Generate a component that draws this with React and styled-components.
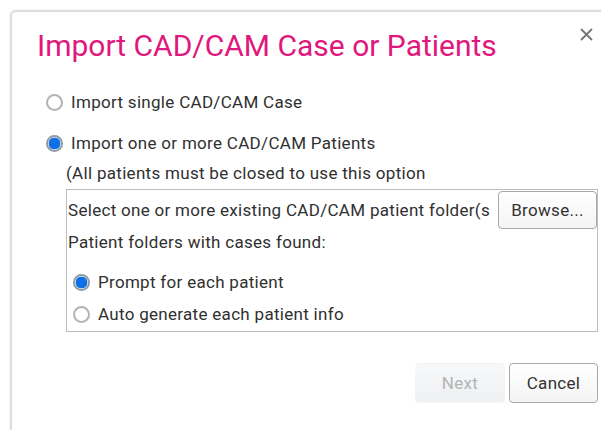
import React, { useState } from "react";
import styled, { createGlobalStyle, css } from "styled-components";

const GlobalStyle = createGlobalStyle`
  html, body {
    margin: 0;
    padding: 0;
    background: #ffffff;
  }

  body {
    font-family: Roboto, "Liberation Sans", Arial, sans-serif;
    color: #303030;
    overflow: hidden;
  }
`;

const Page = styled.div`
  width: 601px;
  height: 430px;
  padding: 10px 0 0 10px;
  box-sizing: border-box;
  overflow: hidden;
`;

const Dialog = styled.div`
  width: 600px;
  height: 440px;
  box-sizing: border-box;
  background: #ffffff;
  border: 2px solid #dcdcdc;
  border-radius: 6px 6px 0 0;
  box-shadow: 0 0 3px rgba(0, 0, 0, 0.08);
`;

const Header = styled.div`
  display: flex;
  align-items: flex-start;
  justify-content: space-between;
  width: 586px;
  box-sizing: border-box;
  padding: 17px 5px 0 25px;
  height: 76px;
`;

const Title = styled.h1`
  margin: 0;
  font-size: 30px;
  line-height: 34px;
  font-weight: 400;
  color: #e0177c;
`;

const CloseButton = styled.button`
  display: flex;
  align-items: center;
  justify-content: center;
  width: 14px;
  height: 14px;
  margin-top: -2px;
  padding: 0;
  border: 0;
  background: transparent;
  cursor: pointer;
`;

const Body = styled.div`
  width: 586px;
  box-sizing: border-box;
  padding-left: 34px;
  letter-spacing: 0.3px;
`;

const OptionRow = styled.label`
  display: flex;
  align-items: center;
  gap: 8px;
  height: 28px;
  font-size: 17px;
  cursor: pointer;
  margin-bottom: ${(p) => p.$gap || 0}px;
  ${(p) =>
    p.$inset &&
    css`
      height: 32px;
      padding-left: 5px;
    `}
`;

const RadioCircle = styled.span`
  display: inline-block;
  flex: none;
  width: 17px;
  height: 17px;
  box-sizing: border-box;
  border-radius: 50%;
  border: 2px solid #b3b3b3;
  background: #ffffff;
  ${(p) =>
    p.$checked &&
    css`
      border-color: #8f9aa6;
      background: radial-gradient(circle, #0f6fe6 0 5.6px, #ffffff 6.2px);
    `}
`;

const Note = styled.div`
  margin-left: 20px;
  height: 30px;
  display: flex;
  align-items: center;
  font-size: 17px;
  margin-top: 1px;
`;

const FolderBox = styled.div`
  margin-left: 20px;
  border: 1px solid #bdbdbd;
  padding: 0 0 1px 1px;
  margin-top: 1px;
`;

const SelectRow = styled.div`
  display: flex;
  align-items: center;
  justify-content: space-between;
  height: 40px;
  font-size: 17px;
`;

const PlainText = styled.span`
  white-space: nowrap;
`;

const Button = styled.button`
  font-family: Roboto, "Liberation Sans", Arial, sans-serif;
  font-size: 17px;
  letter-spacing: 0.3px;
  color: #333333;
  width: ${(p) => p.$width}px;
  height: ${(p) => p.$height || 40}px;
  border: 1px solid #a9a9a9;
  border-radius: 4px;
  background: linear-gradient(#ffffff, #f4f4f4);
  padding: 0;
  cursor: pointer;

  &:disabled {
    color: #b4b4b4;
    border-color: transparent;
    background: linear-gradient(#f7f8f9, #eef0f2);
    cursor: default;
  }
`;

const FolderLabel = styled.div`
  height: 24px;
  display: flex;
  align-items: center;
  font-size: 17px;
  margin-bottom: 12px;
`;

const Footer = styled.div`
  display: flex;
  justify-content: flex-end;
  gap: 4px;
  margin-top: 31px;
`;

const Radio = ({ checked, onSelect, children, inset, gap }) => (
  <OptionRow $inset={inset} $gap={gap} onClick={onSelect}>
    <RadioCircle $checked={checked} />
    <PlainText>{children}</PlainText>
  </OptionRow>
);

const App = () => {
  const [mode, setMode] = useState("patients");
  const [prompt, setPrompt] = useState("prompt");

  return (
    <Page>
      <GlobalStyle />
      <Dialog>
        <Header>
          <Title>Import CAD/CAM Case or Patients</Title>
          <CloseButton aria-label="Close">
            <svg width="13" height="13" viewBox="0 0 13 13">
              <path
                d="M1.5 1.5 L11.5 11.5 M11.5 1.5 L1.5 11.5"
                stroke="#747474"
                strokeWidth="1.8"
                strokeLinecap="round"
              />
            </svg>
          </CloseButton>
        </Header>
        <Body>
          <Radio
            checked={mode === "single"}
            onSelect={() => setMode("single")}
            gap={13}
          >
            Import single CAD/CAM Case
          </Radio>
          <Radio
            checked={mode === "patients"}
            onSelect={() => setMode("patients")}
          >
            Import one or more CAD/CAM Patients
          </Radio>
          <Note>(All patients must be closed to use this option</Note>
          <FolderBox>
            <SelectRow>
              <PlainText>Select one or more existing CAD/CAM patient folder(s</PlainText>
              <Button $width={99} $height={38}>
                Browse...
              </Button>
            </SelectRow>
            <FolderLabel>Patient folders with cases found:</FolderLabel>
            <Radio
              inset
              checked={prompt === "prompt"}
              onSelect={() => setPrompt("prompt")}
            >
              Prompt for each patient
            </Radio>
            <Radio
              inset
              checked={prompt === "auto"}
              onSelect={() => setPrompt("auto")}
            >
              Auto generate each patient info
            </Radio>
          </FolderBox>
          <Footer>
            <Button $width={90} disabled>
              Next
            </Button>
            <Button $width={89}>Cancel</Button>
          </Footer>
        </Body>
      </Dialog>
    </Page>
  );
};

export default App;
